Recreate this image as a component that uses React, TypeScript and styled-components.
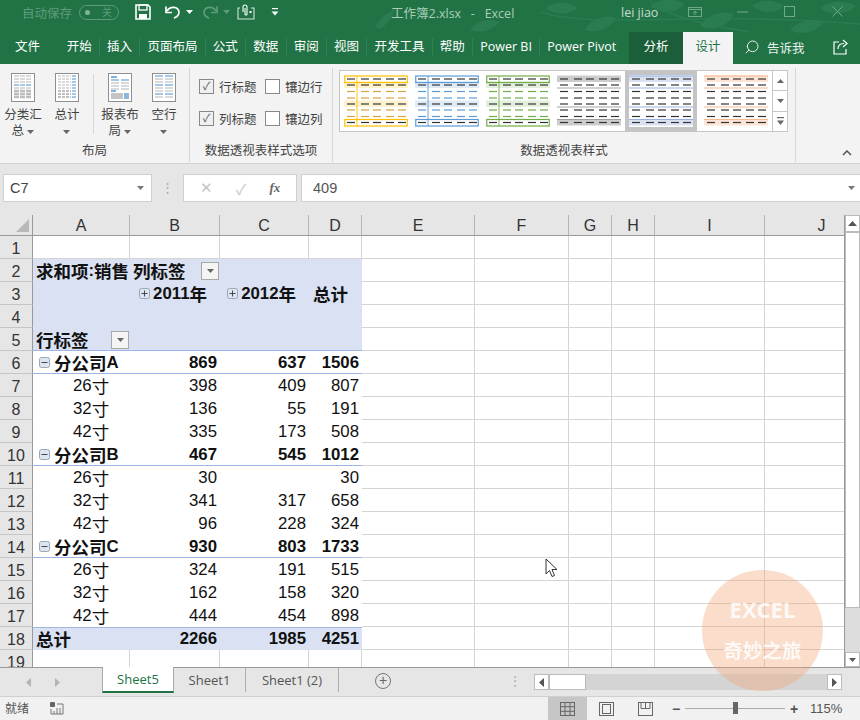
import React from 'react';
import styled, { createGlobalStyle } from 'styled-components';
import { Search } from 'lucide-react';

const UI_FONT = `"Liberation Sans", "Noto Sans CJK SC", sans-serif`;
const CHROME_FONT = `"Open Sans", "Noto Sans CJK SC", sans-serif`;

const GlobalStyle = createGlobalStyle`
  html, body { margin: 0; padding: 0; background: #fff; }
  body { font-family: ${UI_FONT}; }
`;

/* ---------- drawings ---------- */

const LeafBackdrop = () => (
  <LeafSvg viewBox="0 0 860 64" preserveAspectRatio="none">
    <g fill="#2a7d50">
      <path d="M375 27 C380 18 388 12 395 9 C392 17 388 24 380 29 Z" />
      <path d="M470 30 C478 20 490 18 500 22 C492 30 482 34 470 30 Z" />
      <path d="M545 8 C556 0 570 2 578 8 C568 16 556 15 545 8 Z" />
      <path d="M585 30 C590 20 604 14 616 18 C610 28 598 34 585 30 Z" />
      <path d="M650 6 C660 -2 676 -2 684 4 C676 14 660 14 650 6 Z" />
      <path d="M700 26 C708 14 722 10 734 14 C728 26 714 32 700 26 Z" />
      <path d="M752 6 C762 -2 776 0 784 6 C776 14 762 14 752 6 Z" />
      <path d="M790 30 C800 20 812 18 824 22 C816 32 802 36 790 30 Z" />
      <path d="M820 8 C830 0 846 0 856 6 C846 16 830 16 820 8 Z" />
    </g>
    <g fill="none" stroke="#2a7d50" strokeWidth="1.5">
      <path d="M540 12 C600 30 680 10 860 24" />
      <path d="M650 0 C660 14 700 24 750 32" />
    </g>
  </LeafSvg>
);

const SaveIcon = () => (
  <svg width="16" height="16" viewBox="0 0 16 16">
    <path d="M1 1h12l2 2v12H1z" fill="none" stroke="#fff" strokeWidth="1.6" />
    <rect x="4" y="1" width="8" height="5" fill="none" stroke="#fff" strokeWidth="1.3" />
    <rect x="4" y="10" width="8" height="5" fill="#fff" />
  </svg>
);

const UndoIcon = ({ $dim }: { $dim?: boolean }) => (
  <svg width="16" height="14" viewBox="0 0 16 14" style={$dim ? { transform: 'scaleX(-1)' } : undefined}>
    <path d="M2 6 C5 1 13 1 14 7 C14 10 12 12 9 13" fill="none" stroke={$dim ? '#5f9c7a' : '#fff'} strokeWidth="1.7" />
    <path d="M1 1.5 V7.5 H7" fill="none" stroke={$dim ? '#5f9c7a' : '#fff'} strokeWidth="1.7" />
  </svg>
);

const TouchIcon = () => (
  <svg width="18" height="16" viewBox="0 0 18 16" fill="none" stroke="#fff" strokeWidth="1.1">
    <path d="M3 4H1v11h16V4h-3" stroke="#cfe3d7" />
    <path d="M6 8V3a2 2 0 0 1 4 0v7a1 1 0 0 1-2 0V4" />
    <rect x="12.5" y="7" width="2" height="2" fill="#fff" stroke="none" />
  </svg>
);

const Caret = ({ color = '#fff' }: { color?: string }) => (
  <svg width="7" height="4" viewBox="0 0 7 4"><path d="M0 0h7L3.5 4z" fill={color} /></svg>
);

const SideArrow = ({ dir, color = '#555' }: { dir: 'left' | 'right'; color?: string }) => (
  <svg width="5" height="9" viewBox="0 0 5 9">
    <path d={dir === 'left' ? 'M5 0v9L0 4.500z' : 'M0 0v9l5-4.500z'} fill={color} />
  </svg>
);

const QuickMore = () => (
  <svg width="8" height="8" viewBox="0 0 8 8">
    <rect x="1" y="0" width="6" height="1.2" fill="#fff" />
    <path d="M0.5 3.5h7L4 7.5z" fill="#fff" />
  </svg>
);

const QuickMoreDark = () => (
  <svg width="9" height="9" viewBox="0 0 9 9">
    <rect x="1" y="0" width="7" height="1.200" fill="#666" />
    <path d="M1 3.500h7L4.500 8z" fill="#666" />
  </svg>
);

const WindowIcon = ({ kind }: { kind: string }) => (
  <svg width="14" height="12" viewBox="0 0 14 12" fill="none" stroke="#6ea98a" strokeWidth="1">
    {kind === 'ribbon' && (<><rect x="0.5" y="1.5" width="13" height="9" /><path d="M0.5 3.5h13M7 9V5M5 7l2-2 2 2" /></>)}
    {kind === 'min' && <path d="M1 6h11" />}
    {kind === 'max' && <rect x="1.5" y="0.5" width="10" height="10" />}
    {kind === 'close' && <path d="M1.5 0.5l10 10M11.5 0.5l-10 10" />}
  </svg>
);

const ShareIcon = () => (
  <svg width="17" height="16" viewBox="0 0 17 16" fill="none" stroke="#fff" strokeWidth="1.2">
    <path d="M6 3H1v12h12v-5" />
    <path d="M5 10 C5 6 8 4.500 11 4.500 M10 1l4 3.500-4 3.500" />
  </svg>
);

const PageIcon = ({ kind }: { kind: number }) => {
  const blue = '#4a90d0';
  const grey = '#b5b5b5';
  const rows = [3, 6, 9, 12, 15, 18, 21, 24];
  return (
    <svg width="24" height="29" viewBox="0 0 24 29">
      <rect x="0.5" y="0.5" width="23" height="28" fill="#fff" stroke="#8f8f8f" />
      {kind === 0 && rows.map((y, i) => (
        <path key={y} d={`M3 ${y}h18`} stroke={i === 3 ? blue : i > 4 ? '#bdbdbd' : grey} strokeWidth={i > 4 ? 2.4 : 1} strokeDasharray="5 1" />
      ))}
      {kind === 1 && rows.map((y, i) => (
        <g key={y}>
          <path d={`M3 ${y}h13`} stroke={i > 4 ? '#bdbdbd' : grey} strokeWidth={i > 4 ? 2 : 1} strokeDasharray="3 1" />
          <path d={`M17 ${y}h4`} stroke={blue} strokeWidth="1" />
        </g>
      ))}
      {kind === 2 && (
        <>
          <path d="M3 4h6" stroke={blue} strokeWidth="1.4" />
          {[7, 10, 13, 16].map((y) => <path key={y} d={`M3 ${y}h18`} stroke={y === 7 ? blue : grey} strokeDasharray="8 2" />)}
          <path d="M3 18h5" stroke={blue} strokeWidth="1.4" />
          <rect x="3" y="20" width="12" height="6" fill="#c4c4c4" />
          <rect x="16" y="20" width="5" height="6" fill="#8fb5dc" />
        </>
      )}
      {kind === 3 && rows.map((y, i) => (
        <path key={y} d={`M3 ${y}h18`} stroke={i % 3 === 0 ? blue : grey} strokeDasharray="8 2" />
      ))}
    </svg>
  );
};

type ThumbProps = { line: string; fill: string; dash: string; mode: 'box' | 'grey' | 'plain' };

const Thumb = ({ line, fill, dash, mode }: ThumbProps) => {
  const rowY = [4, 10, 16.500, 23, 29, 35, 41.500, 47.500];
  const colX = [3, 17, 29, 42, 54];
  const filled = mode === 'box' ? [1, 4] : [0, 7];
  const isAccent = (r: number) => mode === 'box' && [2, 3, 5, 6].includes(r);
  return (
    <svg width="64" height="52" viewBox="0 0 64 52">
      {filled.map((r) => (
        <rect key={r} x="0" y={rowY[r] - 3.5} width="64" height="6.500" fill={fill} />
      ))}
      {mode === 'box' && [0, 7].map((r) => (
        <rect key={r} x="0.75" y={rowY[r] - 3} width="62.500" height="6.500" fill="none" stroke={line} strokeWidth="1.2" />
      ))}
      {mode === 'box' && <path d={`M13 1V51`} stroke={line} strokeWidth="0.9" />}
      {mode !== 'box' && [1, 4, 6.5].map((v) => {
        const y = v === 6.5 ? 44.500 : rowY[v] + 3;
        return <path key={v} d={`M0 ${y}H64`} stroke={line} strokeWidth="0.9" />;
      })}
      {mode === 'plain' && <path d="M0 1H64" stroke={line} strokeWidth="0.9" />}
      {rowY.map((y, r) => colX.map((x) => (
        <path key={`${r}-${x}`} d={`M${x} ${y}h8`} stroke={isAccent(r) ? dash : '#333'} strokeWidth="1.200" />
      )))}
    </svg>
  );
};

const ExpandBox = ({ minus }: { minus?: boolean }) => (
  <svg width="11" height="11" viewBox="0 0 11 11" style={{ flex: 'none' }}>
    <rect x="0.5" y="0.5" width="10" height="10" rx="2" fill="#dfe5ef" stroke="#9aa7b8" />
    <path d={minus ? 'M2.500 5.500h6' : 'M2.500 5.500h6M5.500 2.500v6'} stroke="#445" strokeWidth="1" />
  </svg>
);

const PointerIcon = () => (
  <svg width="14" height="21" viewBox="0 0 14 21">
    <path d="M1 1v15l3.500-3.500 2.500 6 2.500-1-2.500-6h5z" fill="#fff" stroke="#333" strokeWidth="1" />
  </svg>
);

const ReadyIcon = () => (
  <svg width="14" height="13" viewBox="0 0 14 13">
    <rect x="0" y="0" width="5" height="5" rx="1" fill="#666" />
    <path d="M7 2h6v10H1V7" fill="none" stroke="#777" />
    <path d="M4 9v3M7 6v6M10 6v6" stroke="#777" />
  </svg>
);

const ViewIcon = ({ kind }: { kind: number }) => (
  <svg width="15" height="14" viewBox="0 0 15 14" fill="none" stroke="#666" strokeWidth="1">
    <rect x="0.5" y="0.5" width="14" height="13" />
    {kind === 0 && <path d="M5 0v14M10 0v14M0 4.700h15M0 9.300h15" />}
    {kind === 1 && <rect x="3.500" y="2.500" width="8" height="9" />}
    {kind === 2 && <path d="M7.500 0v6.500M12 0v6.500H3V0" />}
  </svg>
);

/* ---------- data ---------- */

const TABS = ['开始', '插入', '页面布局', '公式', '数据', '审阅', '视图', '开发工具', '帮助', 'Power BI', 'Power Pivot'];
const COLUMNS = [
  { id: 'A', w: 97 }, { id: 'B', w: 90 }, { id: 'C', w: 89 }, { id: 'D', w: 53 }, { id: 'E', w: 113 },
  { id: 'F', w: 94 }, { id: 'G', w: 43 }, { id: 'H', w: 43 }, { id: 'I', w: 110 }, { id: 'J', w: 114 },
];
const THUMBS: ThumbProps[] = [
  { line: '#ffc000', fill: '#fff2cc', dash: '#d9a441', mode: 'box' },
  { line: '#5b9bd5', fill: '#deebf7', dash: '#5b9bd5', mode: 'box' },
  { line: '#70ad47', fill: '#e2efda', dash: '#70ad47', mode: 'box' },
  { line: '#999999', fill: '#cccccc', dash: '#333333', mode: 'grey' },
  { line: '#8ea9db', fill: '#d9e1f2', dash: '#333333', mode: 'plain' },
  { line: '#f4b084', fill: '#fce4d6', dash: '#333333', mode: 'plain' },
];

type Body = { row: number; label: string; b: string; c: string; d: string; group?: boolean };
const BODY: Body[] = [
  { row: 6, label: '分公司A', b: '869', c: '637', d: '1506', group: true },
  { row: 7, label: '26寸', b: '398', c: '409', d: '807' },
  { row: 8, label: '32寸', b: '136', c: '55', d: '191' },
  { row: 9, label: '42寸', b: '335', c: '173', d: '508' },
  { row: 10, label: '分公司B', b: '467', c: '545', d: '1012', group: true },
  { row: 11, label: '26寸', b: '30', c: '', d: '30' },
  { row: 12, label: '32寸', b: '341', c: '317', d: '658' },
  { row: 13, label: '42寸', b: '96', c: '228', d: '324' },
  { row: 14, label: '分公司C', b: '930', c: '803', d: '1733', group: true },
  { row: 15, label: '26寸', b: '324', c: '191', d: '515' },
  { row: 16, label: '32寸', b: '162', c: '158', d: '320' },
  { row: 17, label: '42寸', b: '444', c: '454', d: '898' },
];
const EMPTY_TAIL = ['E', 'F', 'G', 'H', 'I', 'J'];

/* ---------- sheet rows ---------- */

// the han glyphs in the sheet sit a bit larger than the latin ones
const Mixed = ({ text }: { text: string }) => (
  <>
    {text.split(/([\u4e00-\u9fff]+)/).filter(Boolean).map((part, i) =>
      /[\u4e00-\u9fff]/.test(part) ? <Han key={i}>{part}</Han> : <span key={i}>{part}</span>,
    )}
  </>
);

const Tail = ({ row }: { row: number }) => (
  <>
    {EMPTY_TAIL.map((c) => <Cell key={`${c}${row}`} />)}
  </>
);

const PivotRows = () => (
  <>
    <RowHead>1</RowHead>
    <Cell /><Cell /><Cell /><Cell /><Tail row={1} />

    <RowHead>2</RowHead>
    <Cell $band $bold><Mixed text="求和项:销售" /></Cell>
    <Cell $band $bold><Mixed text="列标签" /><FilterButton><Caret color="#666" /></FilterButton></Cell>
    <Cell $band /><Cell $band /><Tail row={2} />

    <RowHead>3</RowHead>
    <Cell $band />
    <Cell $band $bold $right={13}><ExpandBox /><YearText><Mixed text="2011年" /></YearText></Cell>
    <Cell $band $bold $right={13}><ExpandBox /><YearText><Mixed text="2012年" /></YearText></Cell>
    <Cell $band $bold $right={14}><Mixed text="总计" /></Cell><Tail row={3} />

    <RowHead>4</RowHead>
    <Cell $band /><Cell $band /><Cell $band /><Cell $band /><Tail row={4} />

    <RowHead>5</RowHead>
    <Cell $band $bold $rule><Mixed text="行标签" /><FilterButton><Caret color="#666" /></FilterButton></Cell>
    <Cell $band $rule /><Cell $band $rule /><Cell $band $rule /><Tail row={5} />

    {BODY.map((r) => (
      <React.Fragment key={r.row}>
        <RowHead>{r.row}</RowHead>
        <Cell $plain $bold={r.group} $rule={r.group} $indent={r.group ? 6 : 40}>
          {r.group && <ExpandBox minus />}
          {r.group ? <GroupText><Mixed text={r.label} /></GroupText> : <Mixed text={r.label} />}
        </Cell>
        <Cell $plain $bold={r.group} $rule={r.group} $right={3}>{r.b}</Cell>
        <Cell $plain $bold={r.group} $rule={r.group} $right={3}>{r.c}</Cell>
        <Cell $plain $bold={r.group} $rule={r.group} $right={3}>{r.d}</Cell>
        <Tail row={r.row} />
      </React.Fragment>
    ))}

    <RowHead>18</RowHead>
    <Cell $band $bold $topRule><Mixed text="总计" /></Cell>
    <Cell $band $bold $topRule $right={3}>2266</Cell>
    <Cell $band $bold $topRule $right={3}>1985</Cell>
    <Cell $band $bold $topRule $right={3}>4251</Cell>
    <Tail row={18} />

    <RowHead>19</RowHead>
    <Cell /><Cell /><Cell /><Cell /><Tail row={19} />
  </>
);

/* ---------- page ---------- */

const App = () => (
  <Page>
    <GlobalStyle />
    <GreenHeader>
      <LeafBackdrop />
      <TitleBar>
        <QuickAccess>
          <AutoSave>自动保存</AutoSave>
          <Toggle><ToggleDot />关</Toggle>
          <QuickSlot $w={30}><SaveIcon /></QuickSlot>
          <QuickSlot $w={37}><UndoIcon /><Caret /></QuickSlot>
          <QuickSlot $w={35}><UndoIcon $dim /><Caret color="#5f9c7a" /></QuickSlot>
          <QuickSlot $w={34}><TouchIcon /></QuickSlot>
          <QuickSlot $w={20}><QuickMore /></QuickSlot>
        </QuickAccess>
        <DocTitle>工作簿2.xlsx&nbsp;&nbsp; -&nbsp;&nbsp; Excel</DocTitle>
        <UserName>lei jiao</UserName>
        <WindowButtons>
          <WindowIcon kind="ribbon" />
          <WindowIcon kind="min" />
          <WindowIcon kind="max" />
          <WindowIcon kind="close" />
        </WindowButtons>
      </TitleBar>
      <TabBar>
        <FileTab>文件</FileTab>
        <TabStrip>
          {TABS.map((t, i) => <Tab key={t} $divider={i > 0}>{t}</Tab>)}
        </TabStrip>
        <ContextTab>分析</ContextTab>
        <ActiveTab>设计</ActiveTab>
        <TellMe><Search size={16} strokeWidth={1.5} style={{ transform: 'scaleX(-1)' }} />告诉我</TellMe>
        <ShareSlot><ShareIcon /></ShareSlot>
      </TabBar>
    </GreenHeader>

    <Ribbon>
      <RibbonGroup $w={190}>
        <GroupBody>
          <BigButton $w={46}><PageIcon kind={0} /><BigLabel>分类汇<br />总 <Caret color="#666" /></BigLabel></BigButton>
          <BigButton $w={42}><PageIcon kind={1} /><BigLabel>总计<br /><Caret color="#666" /></BigLabel></BigButton>
          <GroupDivider />
          <BigButton $w={50}><PageIcon kind={2} /><BigLabel>报表布<br />局 <Caret color="#666" /></BigLabel></BigButton>
          <BigButton $w={38}><PageIcon kind={3} /><BigLabel>空行<br /><Caret color="#666" /></BigLabel></BigButton>
        </GroupBody>
        <GroupName>布局</GroupName>
      </RibbonGroup>
      <RibbonGroup $w={143}>
        <CheckGrid>
          <CheckItem><CheckBox $checked>✓</CheckBox>行标题</CheckItem>
          <CheckItem><CheckBox />镶边行</CheckItem>
          <CheckItem><CheckBox $checked>✓</CheckBox>列标题</CheckItem>
          <CheckItem><CheckBox />镶边列</CheckItem>
        </CheckGrid>
        <GroupName>数据透视表样式选项</GroupName>
      </RibbonGroup>
      <RibbonGroup $w={463}>
        <Gallery>
          <GalleryBox>
            {THUMBS.map((t, i) => (
              <ThumbFrame key={t.line} $selected={i === 4}><Thumb {...t} /></ThumbFrame>
            ))}
          </GalleryBox>
          <GalleryScroll>
            <GalleryArrow><svg width="7" height="4" viewBox="0 0 7 4"><path d="M0 4h7L3.500 0z" fill="#666" /></svg></GalleryArrow>
            <GalleryArrow><Caret color="#666" /></GalleryArrow>
            <GalleryArrow><QuickMoreDark /></GalleryArrow>
          </GalleryScroll>
        </Gallery>
        <GroupName>数据透视表样式</GroupName>
      </RibbonGroup>
      <Collapse>
        <svg width="10" height="6" viewBox="0 0 10 6"><path d="M1 5l4-4 4 4" fill="none" stroke="#555" strokeWidth="1.500" /></svg>
      </Collapse>
    </Ribbon>

    <FormulaArea>
      <NameBox>C7<Caret color="#777" /></NameBox>
      <Grip>⋮</Grip>
      <FxBox>
        <FxMark>✕</FxMark>
        <FxMark>✓</FxMark>
        <FxLabel>fx</FxLabel>
      </FxBox>
      <FormulaInput>409<Caret color="#777" /></FormulaInput>
    </FormulaArea>

    <SheetArea>
      <SheetGrid>
        <Corner><CornerMark /></Corner>
        {COLUMNS.map((c) => <ColHead key={c.id}>{c.id}</ColHead>)}
        <PivotRows />
      </SheetGrid>
      <VScroll>
        <ScrollButton $h={17}><svg width="9" height="5" viewBox="0 0 9 5"><path d="M0 5h9L4.500 0z" fill="#555" /></svg></ScrollButton>
        <VThumb />
        <VTrack />
        <ScrollButton $h={15}><Caret color="#555" /></ScrollButton>
      </VScroll>
      <Cursor><PointerIcon /></Cursor>
    </SheetArea>

    <SheetTabs>
      <TabNav>
        <SideArrow dir="left" color="#b3b3b3" />
        <SideArrow dir="right" color="#b3b3b3" />
      </TabNav>
      <SheetTab $active $w={72}>Sheet5</SheetTab>
      <SheetTab $w={72} $sep>Sheet1</SheetTab>
      <SheetTab $w={93} $sep>Sheet1 (2)</SheetTab>
      <AddSheet>+</AddSheet>
      <TabGrip>⋮</TabGrip>
      <HScroll>
        <HButton><SideArrow dir="left" /></HButton>
        <HThumb />
        <HTrack />
        <HButton><SideArrow dir="right" /></HButton>
      </HScroll>
    </SheetTabs>

    <StatusBar>
      <Ready>就绪</Ready>
      <ReadyIcon />
      <ViewSlots>
        <ViewSlot $active><ViewIcon kind={0} /></ViewSlot>
        <ViewSlot><ViewIcon kind={1} /></ViewSlot>
        <ViewSlot><ViewIcon kind={2} /></ViewSlot>
      </ViewSlots>
      <ZoomSlider>
        <ZoomSign>−</ZoomSign>
        <ZoomTrack><ZoomKnob /></ZoomTrack>
        <ZoomSign>+</ZoomSign>
      </ZoomSlider>
      <ZoomValue>115%</ZoomValue>
    </StatusBar>

    <Watermark>
      <WatermarkTop>EXCEL</WatermarkTop>
      <WatermarkBottom>奇妙之旅</WatermarkBottom>
    </Watermark>
  </Page>
);

export default App;

/* ---------- styles ---------- */

const Page = styled.div`
  position: relative;
  width: 860px;
  height: 720px;
  overflow: hidden;
  display: flex;
  flex-direction: column;
  font-family: ${UI_FONT};
  color: #333;
`;

const GreenHeader = styled.div`
  position: relative;
  height: 64px;
  flex: none;
  background: #217346;
  font-family: ${CHROME_FONT};
`;

const LeafSvg = styled.svg`
  position: absolute;
  inset: 0;
  width: 100%;
  height: 100%;
`;

const TitleBar = styled.div`
  position: relative;
  height: 32px;
  box-sizing: border-box;
  padding-bottom: 8px;
  display: flex;
  align-items: center;
`;

const QuickAccess = styled.div`
  display: flex;
  align-items: center;
  width: 391px;
  padding-left: 22px;
  box-sizing: border-box;
  flex: none;
`;

const AutoSave = styled.span`
  width: 57px;
  font-size: 12.5px;
  color: #5f9c7a;
  flex: none;
`;

const Toggle = styled.span`
  position: relative;
  width: 40px;
  height: 15px;
  box-sizing: border-box;
  border: 1px solid #5f9c7a;
  border-radius: 8px;
  color: #5f9c7a;
  font-size: 10px;
  line-height: 13px;
  text-align: right;
  padding-right: 6px;
  margin-right: 16px;
  flex: none;
`;

const ToggleDot = styled.i`
  position: absolute;
  left: 5px;
  top: 4px;
  width: 5px;
  height: 5px;
  border-radius: 50%;
  background: #7fb596;
`;

const QuickSlot = styled.span<{ $w: number }>`
  width: ${({ $w }) => $w}px;
  display: flex;
  align-items: center;
  gap: 5px;
  flex: none;
`;

const DocTitle = styled.span`
  width: 230px;
  font-size: 12.500px;
  color: #a9cdb9;
  flex: none;
  white-space: nowrap;
`;

const UserName = styled.span`
  width: 67px;
  font-size: 12.5px;
  color: #c5dccf;
  flex: none;
`;

const WindowButtons = styled.div`
  width: 172px;
  display: flex;
  justify-content: space-between;
  padding-right: 15px;
  box-sizing: border-box;
  flex: none;
`;

const TabBar = styled.div`
  position: relative;
  height: 32px;
  display: flex;
  align-items: stretch;
  color: #fff;
  font-size: 12.5px;
`;

const FileTab = styled.div`
  width: 59px;
  padding-left: 15px;
  box-sizing: border-box;
  line-height: 30px;
  flex: none;
`;

const TabStrip = styled.div`
  width: 570px;
  display: flex;
  flex: none;
`;

const Tab = styled.div<{ $divider?: boolean }>`
  padding: 0 7.700px;
  line-height: 30px;
  white-space: nowrap;
  &::before {
    content: '';
    display: ${({ $divider }) => ($divider ? 'block' : 'none')};
    float: left;
    width: 1px;
    height: 18px;
    margin: 6px 0 0 -8px;
    background: #2f8155;
  }
`;

const ContextTab = styled.div`
  width: 54px;
  text-align: center;
  line-height: 30px;
  background: #1b5f3a;
  flex: none;
`;

const ActiveTab = styled.div`
  width: 50px;
  text-align: center;
  line-height: 30px;
  background: #f3f3f3;
  color: #217346;
  flex: none;
`;

const TellMe = styled.div`
  display: flex;
  align-items: center;
  gap: 7px;
  padding: 0 0 2px 11px;
  color: #e8f1ec;
  width: 100px;
  box-sizing: border-box;
  flex: none;
`;

const ShareSlot = styled.div`
  display: flex;
  align-items: center;
  padding-bottom: 2px;
`;

const Ribbon = styled.div`
  position: relative;
  height: 100px;
  flex: none;
  display: flex;
  box-sizing: border-box;
  background: #f3f3f3;
  border-bottom: 1px solid #d4d4d4;
`;

const RibbonGroup = styled.div<{ $w: number }>`
  width: ${({ $w }) => $w}px;
  height: 94px;
  margin-top: 4px;
  box-sizing: border-box;
  border-right: 1px solid #d6d6d6;
  display: flex;
  flex-direction: column;
  flex: none;
`;

const GroupBody = styled.div`
  flex: 1;
  display: flex;
`;

const BigButton = styled.div<{ $w: number }>`
  width: ${({ $w }) => $w}px;
  display: flex;
  flex-direction: column;
  align-items: center;
  padding-top: 5px;
  flex: none;
`;

const BigLabel = styled.div`
  font-size: 12.500px;
  line-height: 16px;
  text-align: center;
  margin-top: 5px;
  color: #444;
  white-space: nowrap;
  svg { vertical-align: middle; }
`;

const GroupDivider = styled.div`
  width: 1px;
  height: 60px;
  margin: 6px 1px 0 5px;
  background: #d8d8d8;
  flex: none;
`;

const GroupName = styled.div`
  height: 22px;
  text-align: center;
  font-size: 12.500px;
  line-height: 22px;
  color: #444;
`;

const CheckGrid = styled.div`
  flex: 1;
  display: grid;
  grid-template-columns: 66px 70px;
  grid-auto-rows: 32px;
  padding: 2px 0 0 9px;
`;

const CheckItem = styled.div`
  display: flex;
  align-items: center;
  gap: 5px;
  font-size: 12.500px;
  color: #444;
`;

const CheckBox = styled.span<{ $checked?: boolean }>`
  width: 13px;
  height: 13px;
  background: ${({ $checked }) => ($checked ? '#f0f0f0' : '#fff')};
  border: 1px solid #888;
  color: #555;
  font-size: 11px;
  line-height: 13px;
  text-align: center;
  flex: none;
`;

const Gallery = styled.div`
  flex: 1;
  display: flex;
  padding: 2px 0 0 6px;
`;

const GalleryBox = styled.div`
  width: 434px;
  height: 62px;
  box-sizing: border-box;
  border: 1px solid #c6c6c6;
  background: #fff;
  display: flex;
  align-items: center;
  justify-content: space-between;
  padding: 0 4px;
`;

const ThumbFrame = styled.div<{ $selected?: boolean }>`
  box-sizing: border-box;
  display: flex;
  align-items: center;
  justify-content: center;
  width: ${({ $selected }) => ($selected ? '72px' : '64px')};
  height: 60px;
  margin: ${({ $selected }) => ($selected ? '0 0 0 -3px' : '0')};
  background: ${({ $selected }) => ($selected ? '#c4c4c4' : 'transparent')};
  svg { background: ${({ $selected }) => ($selected ? '#fff' : 'transparent')}; }
`;

const GalleryScroll = styled.div`
  width: 15px;
  height: 62px;
  display: flex;
  flex-direction: column;
`;

const GalleryArrow = styled.div`
  flex: 1;
  box-sizing: border-box;
  display: flex;
  align-items: center;
  justify-content: center;
  background: #fff;
  border: 1px solid #c6c6c6;
  border-left: none;
  & + & { border-top: none; }
`;

const Collapse = styled.div`
  position: absolute;
  right: 8px;
  bottom: 3px;
`;

const FormulaArea = styled.div`
  height: 51px;
  flex: none;
  box-sizing: border-box;
  background: #e6e6e6;
  display: flex;
  align-items: flex-start;
  padding-top: 10px;
  font-size: 14px;
`;

const NameBox = styled.div`
  margin-left: 3px;
  width: 149px;
  height: 28px;
  box-sizing: border-box;
  background: #fff;
  border: 1px solid #d0d0d0;
  display: flex;
  align-items: center;
  justify-content: space-between;
  padding: 0 7px 0 6px;
  font-size: 14.500px;
  color: #444;
`;

const Grip = styled.div`
  width: 31px;
  text-align: center;
  color: #aaa;
  line-height: 28px;
  font-size: 13px;
`;

const FxBox = styled.div`
  width: 114px;
  height: 28px;
  box-sizing: border-box;
  background: #fff;
  border: 1px solid #d0d0d0;
  display: flex;
  align-items: center;
  justify-content: space-around;
  padding: 0 4px;
`;

const FxMark = styled.span`
  font-size: 15px;
  color: #c4c4c4;
`;

const FxLabel = styled.span`
  font-family: "Liberation Serif", serif;
  font-style: italic;
  font-weight: bold;
  font-size: 13px;
  color: #666;
`;

const FormulaInput = styled.div`
  margin-left: 4px;
  flex: 1;
  height: 28px;
  box-sizing: border-box;
  background: #fff;
  border: 1px solid #d0d0d0;
  border-right: none;
  display: flex;
  align-items: center;
  justify-content: space-between;
  padding: 0 5px 0 11px;
  font-size: 14.500px;
  color: #555;
`;

const SheetArea = styled.div`
  position: relative;
  height: 452px;
  flex: none;
  display: flex;
  overflow: hidden;
  background: #fff;
`;

const SheetGrid = styled.div`
  width: 844px;
  flex: none;
  overflow: hidden;
  display: grid;
  grid-template-columns: 33px ${COLUMNS.map((c) => `${c.w}px`).join(' ')};
  grid-template-rows: 21px repeat(18, 23px) 18px;
  font-size: 16.800px;
  color: #111;
`;

const Corner = styled.div`
  position: relative;
  background: #e6e6e6;
  border-bottom: 1px solid #999;
  border-right: 1px solid #999;
`;

const CornerMark = styled.i`
  position: absolute;
  right: 3px;
  bottom: 3px;
  border-style: solid;
  border-width: 0 0 13px 13px;
  border-color: transparent transparent #b9b9b9 transparent;
`;

const ColHead = styled.div`
  background: #e6e6e6;
  border-right: 1px solid #b5b5b5;
  border-bottom: 1px solid #999;
  box-sizing: border-box;
  text-align: center;
  line-height: 21px;
  font-size: 16px;
  color: #333;
`;

const RowHead = styled.div`
  background: #e6e6e6;
  border-right: 1px solid #999;
  border-bottom: 1px solid #c6c6c6;
  box-sizing: border-box;
  text-align: center;
  line-height: 25px;
  font-size: 16px;
  color: #333;
`;

// pivot rules are drawn as inset shadows so the text in the row does not move
const Cell = styled.div<{
  $band?: boolean;
  $plain?: boolean;
  $bold?: boolean;
  $right?: number;
  $rule?: boolean;
  $topRule?: boolean;
  $indent?: number;
}>`
  position: relative;
  box-sizing: border-box;
  display: flex;
  align-items: center;
  white-space: nowrap;
  justify-content: ${({ $right }) => ($right ? 'flex-end' : 'flex-start')};
  padding: ${({ $right, $indent }) => ($right ? `0 ${$right}px 0 0` : `0 0 0 ${$indent ?? 3}px`)};
  font-weight: ${({ $bold }) => ($bold ? 700 : 400)};
  background: ${({ $band }) => ($band ? '#d9e1f2' : '#fff')};
  border-right: ${({ $band, $plain }) => ($band || $plain ? 'none' : '1px solid #d4d4d4')};
  border-bottom: ${({ $band, $plain }) => ($band || $plain ? 'none' : '1px solid #d4d4d4')};
  box-shadow: ${({ $rule, $topRule }) =>
    $rule ? 'inset 0 -1px 0 #9db6e4' : $topRule ? 'inset 0 1px 0 #9db6e4' : 'none'};
`;

const Han = styled.span`
  font-family: "Noto Sans CJK SC", sans-serif;
  font-size: 17.500px;
  line-height: 1;
`;

const FilterButton = styled.span`
  position: absolute;
  right: 1px;
  top: 3px;
  width: 18px;
  height: 18px;
  box-sizing: border-box;
  background: #f4f4f4;
  border: 1px solid #a8a8a8;
  display: flex;
  align-items: center;
  justify-content: center;
`;

const YearText = styled.span`
  margin-left: 3px;
  display: flex;
  align-items: center;
`;

const GroupText = styled.span`
  margin-left: 4px;
  display: flex;
  align-items: center;
`;

const VScroll = styled.div`
  width: 16px;
  display: flex;
  flex-direction: column;
  background: #dcdcdc;
  border-left: 1px solid #999;
  box-sizing: border-box;
`;

const ScrollButton = styled.div<{ $h: number }>`
  height: ${({ $h }) => $h}px;
  flex: none;
  box-sizing: border-box;
  background: #fff;
  border: 1px solid #bbb;
  display: flex;
  align-items: center;
  justify-content: center;
`;

const VThumb = styled.div`
  height: 376px;
  flex: none;
  background: #fff;
  border: 1px solid #bbb;
  box-sizing: border-box;
`;

const VTrack = styled.div`
  flex: 1;
`;

const Cursor = styled.div`
  position: absolute;
  left: 545px;
  top: 343px;
  line-height: 0;
`;

const SheetTabs = styled.div`
  height: 29px;
  flex: none;
  box-sizing: border-box;
  background: #e6e6e6;
  border-top: 1px solid #999;
  display: flex;
  align-items: stretch;
  font-family: ${CHROME_FONT};
  font-size: 13px;
  color: #555;
`;

const TabNav = styled.div`
  width: 102px;
  display: flex;
  padding-left: 26px;
  gap: 24px;
  box-sizing: border-box;
  align-items: center;
  flex: none;
`;

const SheetTab = styled.div<{ $active?: boolean; $w: number; $sep?: boolean }>`
  width: ${({ $w }) => $w}px;
  flex: none;
  box-sizing: border-box;
  text-align: center;
  line-height: 24px;
  margin-top: ${({ $active }) => ($active ? '-1px' : '0')};
  height: ${({ $active }) => ($active ? '26px' : '24px')};
  align-self: flex-start;
  color: ${({ $active }) => ($active ? '#217346' : '#555')};
  background: ${({ $active }) => ($active ? '#fff' : 'transparent')};
  border-bottom: ${({ $active }) => ($active ? '2px solid #217346' : 'none')};
  border-left: ${({ $active }) => ($active ? '1px solid #aaa' : 'none')};
  border-right: ${({ $active, $sep }) => ($active ? '1px solid #aaa' : $sep ? '1px solid #b0b0b0' : 'none')};
`;

const AddSheet = styled.div`
  width: 16px;
  height: 16px;
  margin: 5px 0 0 36px;
  border: 1.500px solid #777;
  border-radius: 50%;
  box-sizing: border-box;
  text-align: center;
  font-family: ${UI_FONT};
  font-size: 14px;
  line-height: 12px;
  color: #666;
  flex: none;
`;

const TabGrip = styled.div`
  width: 143px;
  text-align: right;
  padding-right: 13px;
  box-sizing: border-box;
  color: #aaa;
  line-height: 26px;
  font-size: 12px;
  flex: none;
`;

const HScroll = styled.div`
  width: 308px;
  height: 16px;
  margin-top: 6px;
  display: flex;
  flex: none;
  background: #d4d4d4;
`;

const HButton = styled.div`
  width: 15px;
  flex: none;
  box-sizing: border-box;
  background: #fff;
  border: 1px solid #bbb;
  display: flex;
  align-items: center;
  justify-content: center;
`;

const HThumb = styled.div`
  width: 37px;
  flex: none;
  box-sizing: border-box;
  background: #fff;
  border: 1px solid #bbb;
`;

const HTrack = styled.div`
  flex: 1;
`;

const StatusBar = styled.div`
  height: 24px;
  flex: none;
  background: #f1f1f1;
  border-top: 1px solid #d0d0d0;
  box-sizing: border-box;
  display: flex;
  align-items: center;
  font-size: 12px;
  color: #555;
`;

const Ready = styled.span`
  width: 50px;
  padding: 0 0 2px 5px;
  box-sizing: border-box;
`;

const ViewSlots = styled.div`
  margin-left: 484px;
  display: flex;
  align-self: stretch;
`;

const ViewSlot = styled.div<{ $active?: boolean }>`
  width: 39px;
  display: flex;
  align-items: center;
  justify-content: center;
  background: ${({ $active }) => ($active ? '#c6c6c6' : 'transparent')};
`;

const ZoomSlider = styled.div`
  margin-left: 6px;
  width: 128px;
  display: flex;
  align-items: center;
  gap: 4px;
`;

const ZoomSign = styled.span`
  font-size: 14px;
  font-weight: 700;
  width: 10px;
  text-align: center;
`;

const ZoomTrack = styled.div`
  position: relative;
  flex: 1;
  height: 1px;
  background: #aaa;
`;

const ZoomKnob = styled.i`
  position: absolute;
  left: 48px;
  top: -6px;
  width: 5px;
  height: 12px;
  background: #666;
`;

const ZoomValue = styled.span`
  margin-left: 11px;
  font-size: 13px;
`;

const Watermark = styled.div`
  position: absolute;
  left: 702px;
  top: 570px;
  width: 121px;
  height: 121px;
  border-radius: 50%;
  background: rgba(240, 160, 110, 0.36);
  color: rgba(255, 255, 255, 0.85);
  display: flex;
  flex-direction: column;
  align-items: center;
  font-weight: 700;
  pointer-events: none;
`;

const WatermarkTop = styled.div`
  margin-top: 26px;
  font-family: "Open Sans", sans-serif;
  font-size: 22px;
  line-height: 26px;
`;

const WatermarkBottom = styled.div`
  margin-top: 17px;
  font-size: 19.500px;
  line-height: 24px;
`;
